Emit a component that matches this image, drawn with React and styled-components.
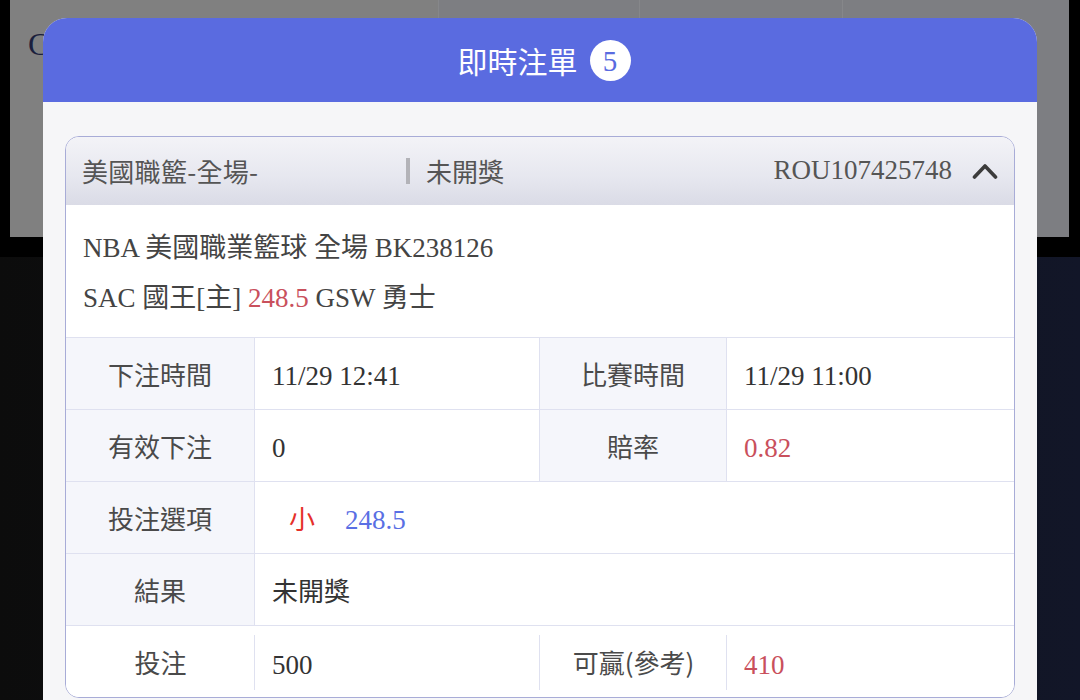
import React from "react";
import styled, { createGlobalStyle } from "styled-components";

const GlobalStyle = createGlobalStyle`
  html, body { margin: 0; padding: 0; background: #000; }
  body { width: 1080px; height: 700px; overflow: hidden; }
  * { box-sizing: border-box; }
`;

const SANS = `"Noto Sans CJK TC", "Noto Sans", sans-serif`;
const MIXED = `"Liberation Serif", "Noto Sans CJK TC", serif`;

const Page = styled.div`
  position: relative;
  width: 1080px;
  height: 700px;
  overflow: hidden;
  display: flex;
  flex-direction: column;
  background: #000;
`;

const TopArea = styled.div`
  height: 257px;
  padding: 0 11px 0 10px;
  background: #000;
`;

const GrayPanel = styled.div`
  height: 237px;
  background: #808080;
  display: flex;
  align-items: flex-start;
`;

const BgLead = styled.div`
  width: 428px;
  padding: 26px 0 0 18px;
  font-family: "Liberation Serif", serif;
  font-size: 32px;
  color: #1b1f3d;
`;

const BgTab = styled.div`
  width: ${(p) => p.$w}px;
  height: 100%;
  background: #7d7e82;
  border-left: 1px solid #86878a;
`;

const BottomArea = styled.div`
  flex: 1;
  background: linear-gradient(90deg, #0c0c0c 0%, #101217 50%, #121628 100%);
`;

const Modal = styled.div`
  position: absolute;
  left: 43px;
  top: 18px;
  width: 994px;
  bottom: 0;
  border-radius: 24px 24px 0 0;
  overflow: hidden;
  background: #f6f6f8;
  display: flex;
  flex-direction: column;
`;

const ModalHeader = styled.div`
  height: 84px;
  flex: none;
  background: #5a6be0;
  display: flex;
  align-items: center;
  justify-content: center;
  gap: 12px;
  padding-left: 8px;
  color: #fff;
  font-family: ${SANS};
  font-size: 30px;
`;

const Badge = styled.span`
  width: 41px;
  height: 41px;
  border-radius: 50%;
  background: #fff;
  color: #5a6be0;
  display: inline-flex;
  align-items: center;
  justify-content: center;
  font-family: "Liberation Serif", serif;
  font-size: 29px;
  line-height: 1;
  padding-top: 2px;
`;

const ModalBody = styled.div`
  flex: 1;
  padding: 34px 22px 0 22px;
`;

const Card = styled.div`
  border: 1.5px solid #a8acd7;
  border-radius: 14px;
  background: #fff;
  overflow: hidden;
  height: 562px;
`;

const CardHeader = styled.div`
  height: 67.5px;
  display: flex;
  align-items: center;
  padding: 0 16px 0 16px;
  background: linear-gradient(180deg, #f3f3f7 0%, #e6e7ef 60%, #dadbe6 100%);
  font-family: ${SANS};
  font-size: 26px;
  color: #555;
`;

const HeaderTitle = styled.div`
  width: 324px;
  white-space: nowrap;
  letter-spacing: 0.3px;
`;

const Divider = styled.span`
  width: 4px;
  height: 26px;
  background: #b3b3b8;
  margin-right: 16px;
`;

const HeaderRight = styled.div`
  margin-left: auto;
  display: flex;
  align-items: center;
  gap: 20px;
  font-family: "Liberation Serif", serif;
  font-size: 27px;
  color: #555;
`;

const Info = styled.div`
  height: 133px;
  padding: 18px 17px 0 17px;
  border-bottom: 1.5px solid #dfe1f0;
  font-family: ${MIXED};
  font-size: 27px;
  line-height: 50px;
  color: #444;
`;

const Line = styled.div`
  white-space: nowrap;
`;

const Red = styled.span`
  color: ${(p) => p.$c || "#c9505c"};
`;

const Table = styled.div`
  display: grid;
  grid-template-columns: 189px 285px 187px 1fr;
  grid-auto-rows: 72px;
`;

const Cell = styled.div`
  position: relative;
  display: flex;
  align-items: center;
  font-size: 26px;
  border-bottom: ${(p) => (p.$last ? "none" : "1.5px solid #dfe1f0")};
  border-right: ${(p) =>
    p.$end || p.$last ? "none" : "1.5px solid #dfe1f0"};
  grid-column: ${(p) => (p.$span ? `span ${p.$span}` : "auto")};
  &::after {
    content: "";
    display: ${(p) => (p.$last && !p.$end ? "block" : "none")};
    position: absolute;
    right: 0;
    top: 9px;
    bottom: 8px;
    width: 1.5px;
    background: #dfe1f0;
  }
`;

const Label = styled(Cell)`
  justify-content: center;
  background: ${(p) => (p.$last ? "#fff" : "#f5f6fb")};
  font-family: ${SANS};
  color: #4a4a4a;
`;

const Value = styled(Cell)`
  padding: 7px 0 0 17px;
  background: #fff;
  font-family: ${MIXED};
  font-size: 27px;
  color: ${(p) => p.$color || "#333"};
`;

const Pick = styled.span`
  font-family: ${SANS};
  font-size: 26px;
  color: #e5302a;
  margin: -6px 30px 0 17px;
`;

const PickValue = styled.span`
  color: #5a6fe4;
`;

const PlainText = styled.span`
  font-family: ${SANS};
  font-size: 26px;
  margin-top: -6px;
`;

const Chevron = () => (
  <svg width="26" height="16" viewBox="0 0 26 16" fill="none">
    <path
      d="M2.5 14 L13 3 L23.5 14"
      stroke="#3c3c3c"
      strokeWidth="3.6"
      strokeLinecap="round"
      strokeLinejoin="round"
    />
  </svg>
);

export default function App() {
  return (
    <>
      <GlobalStyle />
      <Page>
        <TopArea>
          <GrayPanel>
            <BgLead>C</BgLead>
            <BgTab $w={201} />
            <BgTab $w={203} />
            <BgTab $w={227} />
          </GrayPanel>
        </TopArea>
        <BottomArea />

        <Modal>
          <ModalHeader>
            即時注單
            <Badge>5</Badge>
          </ModalHeader>
          <ModalBody>
            <Card>
              <CardHeader>
                <HeaderTitle>美國職籃-全場-</HeaderTitle>
                <Divider />
                <span>未開獎</span>
                <HeaderRight>
                  ROU107425748
                  <Chevron />
                </HeaderRight>
              </CardHeader>
              <Info>
                <Line>NBA 美國職業籃球 全場 BK238126</Line>
                <Line>
                  SAC 國王[主] <Red>248.5</Red> GSW 勇士
                </Line>
              </Info>
              <Table>
                <Label>下注時間</Label>
                <Value>11/29 12:41</Value>
                <Label>比賽時間</Label>
                <Value $end>11/29 11:00</Value>

                <Label>有效下注</Label>
                <Value>0</Value>
                <Label>賠率</Label>
                <Value $end $color="#c9505c">0.82</Value>

                <Label>投注選項</Label>
                <Value $end $span={3}>
                  <Pick>小</Pick>
                  <PickValue>248.5</PickValue>
                </Value>

                <Label>結果</Label>
                <Value $end $span={3}>
                  <PlainText>未開獎</PlainText>
                </Value>

                <Label $last>投注</Label>
                <Value $last>500</Value>
                <Label $last>可贏(參考)</Label>
                <Value $last $end $color="#c9505c">410</Value>
              </Table>
            </Card>
          </ModalBody>
        </Modal>
      </Page>
    </>
  );
}
